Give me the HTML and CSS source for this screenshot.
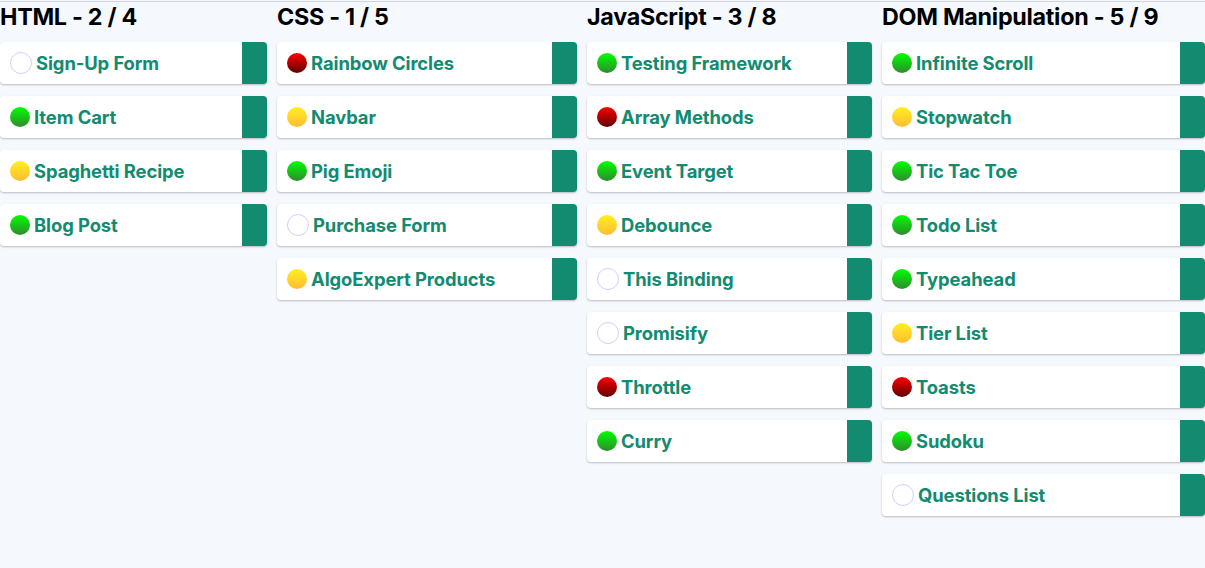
FILE: index.html
```html
<!DOCTYPE html>
<html lang="en">
<head>
<meta charset="utf-8">
<title>Questions</title>
<link rel="stylesheet" href="styles.css">
</head>
<body>
<main class="board">
<section class="category"><h2>HTML - 2 / 4</h2>
<div class="question"><span class="status empty"></span><h3>Sign-Up Form</h3></div>
<div class="question"><span class="status correct"></span><h3>Item Cart</h3></div>
<div class="question"><span class="status partial"></span><h3>Spaghetti Recipe</h3></div>
<div class="question"><span class="status correct"></span><h3>Blog Post</h3></div>
</section>
<section class="category"><h2>CSS - 1 / 5</h2>
<div class="question"><span class="status incorrect"></span><h3>Rainbow Circles</h3></div>
<div class="question"><span class="status partial"></span><h3>Navbar</h3></div>
<div class="question"><span class="status correct"></span><h3>Pig Emoji</h3></div>
<div class="question"><span class="status empty"></span><h3>Purchase Form</h3></div>
<div class="question"><span class="status partial"></span><h3>AlgoExpert Products</h3></div>
</section>
<section class="category"><h2>JavaScript - 3 / 8</h2>
<div class="question"><span class="status correct"></span><h3>Testing Framework</h3></div>
<div class="question"><span class="status incorrect"></span><h3>Array Methods</h3></div>
<div class="question"><span class="status correct"></span><h3>Event Target</h3></div>
<div class="question"><span class="status partial"></span><h3>Debounce</h3></div>
<div class="question"><span class="status empty"></span><h3>This Binding</h3></div>
<div class="question"><span class="status empty"></span><h3>Promisify</h3></div>
<div class="question"><span class="status incorrect"></span><h3>Throttle</h3></div>
<div class="question"><span class="status correct"></span><h3>Curry</h3></div>
</section>
<section class="category"><h2>DOM Manipulation - 5 / 9</h2>
<div class="question"><span class="status correct"></span><h3>Infinite Scroll</h3></div>
<div class="question"><span class="status partial"></span><h3>Stopwatch</h3></div>
<div class="question"><span class="status correct"></span><h3>Tic Tac Toe</h3></div>
<div class="question"><span class="status correct"></span><h3>Todo List</h3></div>
<div class="question"><span class="status correct"></span><h3>Typeahead</h3></div>
<div class="question"><span class="status partial"></span><h3>Tier List</h3></div>
<div class="question"><span class="status incorrect"></span><h3>Toasts</h3></div>
<div class="question"><span class="status correct"></span><h3>Sudoku</h3></div>
<div class="question"><span class="status empty"></span><h3>Questions List</h3></div>
</section>
</main>
</body>
</html>
```
FILE: styles.css
```css
* { box-sizing: border-box; }
body { margin: 0; padding-top: 1px; min-height: 568px; background: #f5f9fe; font-family: Inter, sans-serif; }
.board { display: grid; grid-template-columns: 267px 300px 285px 323px; column-gap: 10px; border-top: 1px solid #d3d3d3; }
.category h2 { margin: 0 0 12px; height: 28px; font-size: 23.3px; line-height: 29px; font-weight: 700; letter-spacing: -0.27px; color: #000; white-space: nowrap; }
.question { display: flex; align-items: center; height: 42px; margin-bottom: 12px; padding-left: 10px; background: #fff; border-right: 25px solid #128b70; border-radius: 4px; box-shadow: 0 1px 2px rgba(0, 0, 0, .25); }
.question h3 { margin: 0 0 0 4px; font-size: 18.4px; line-height: 24px; font-weight: 700; letter-spacing: -0.09px; color: #128b70; white-space: nowrap; }
.status { flex: none; width: 20px; height: 20px; border-radius: 50%; }
.empty { width: 22px; height: 22px; border: 1px solid #d0d0fa; }
.correct { background: linear-gradient(#00ff00, #2e8b2e); }
.partial { background: linear-gradient(#fff01f, #ffbb33); }
.incorrect { background: linear-gradient(#ff0000, #600000); }
```
